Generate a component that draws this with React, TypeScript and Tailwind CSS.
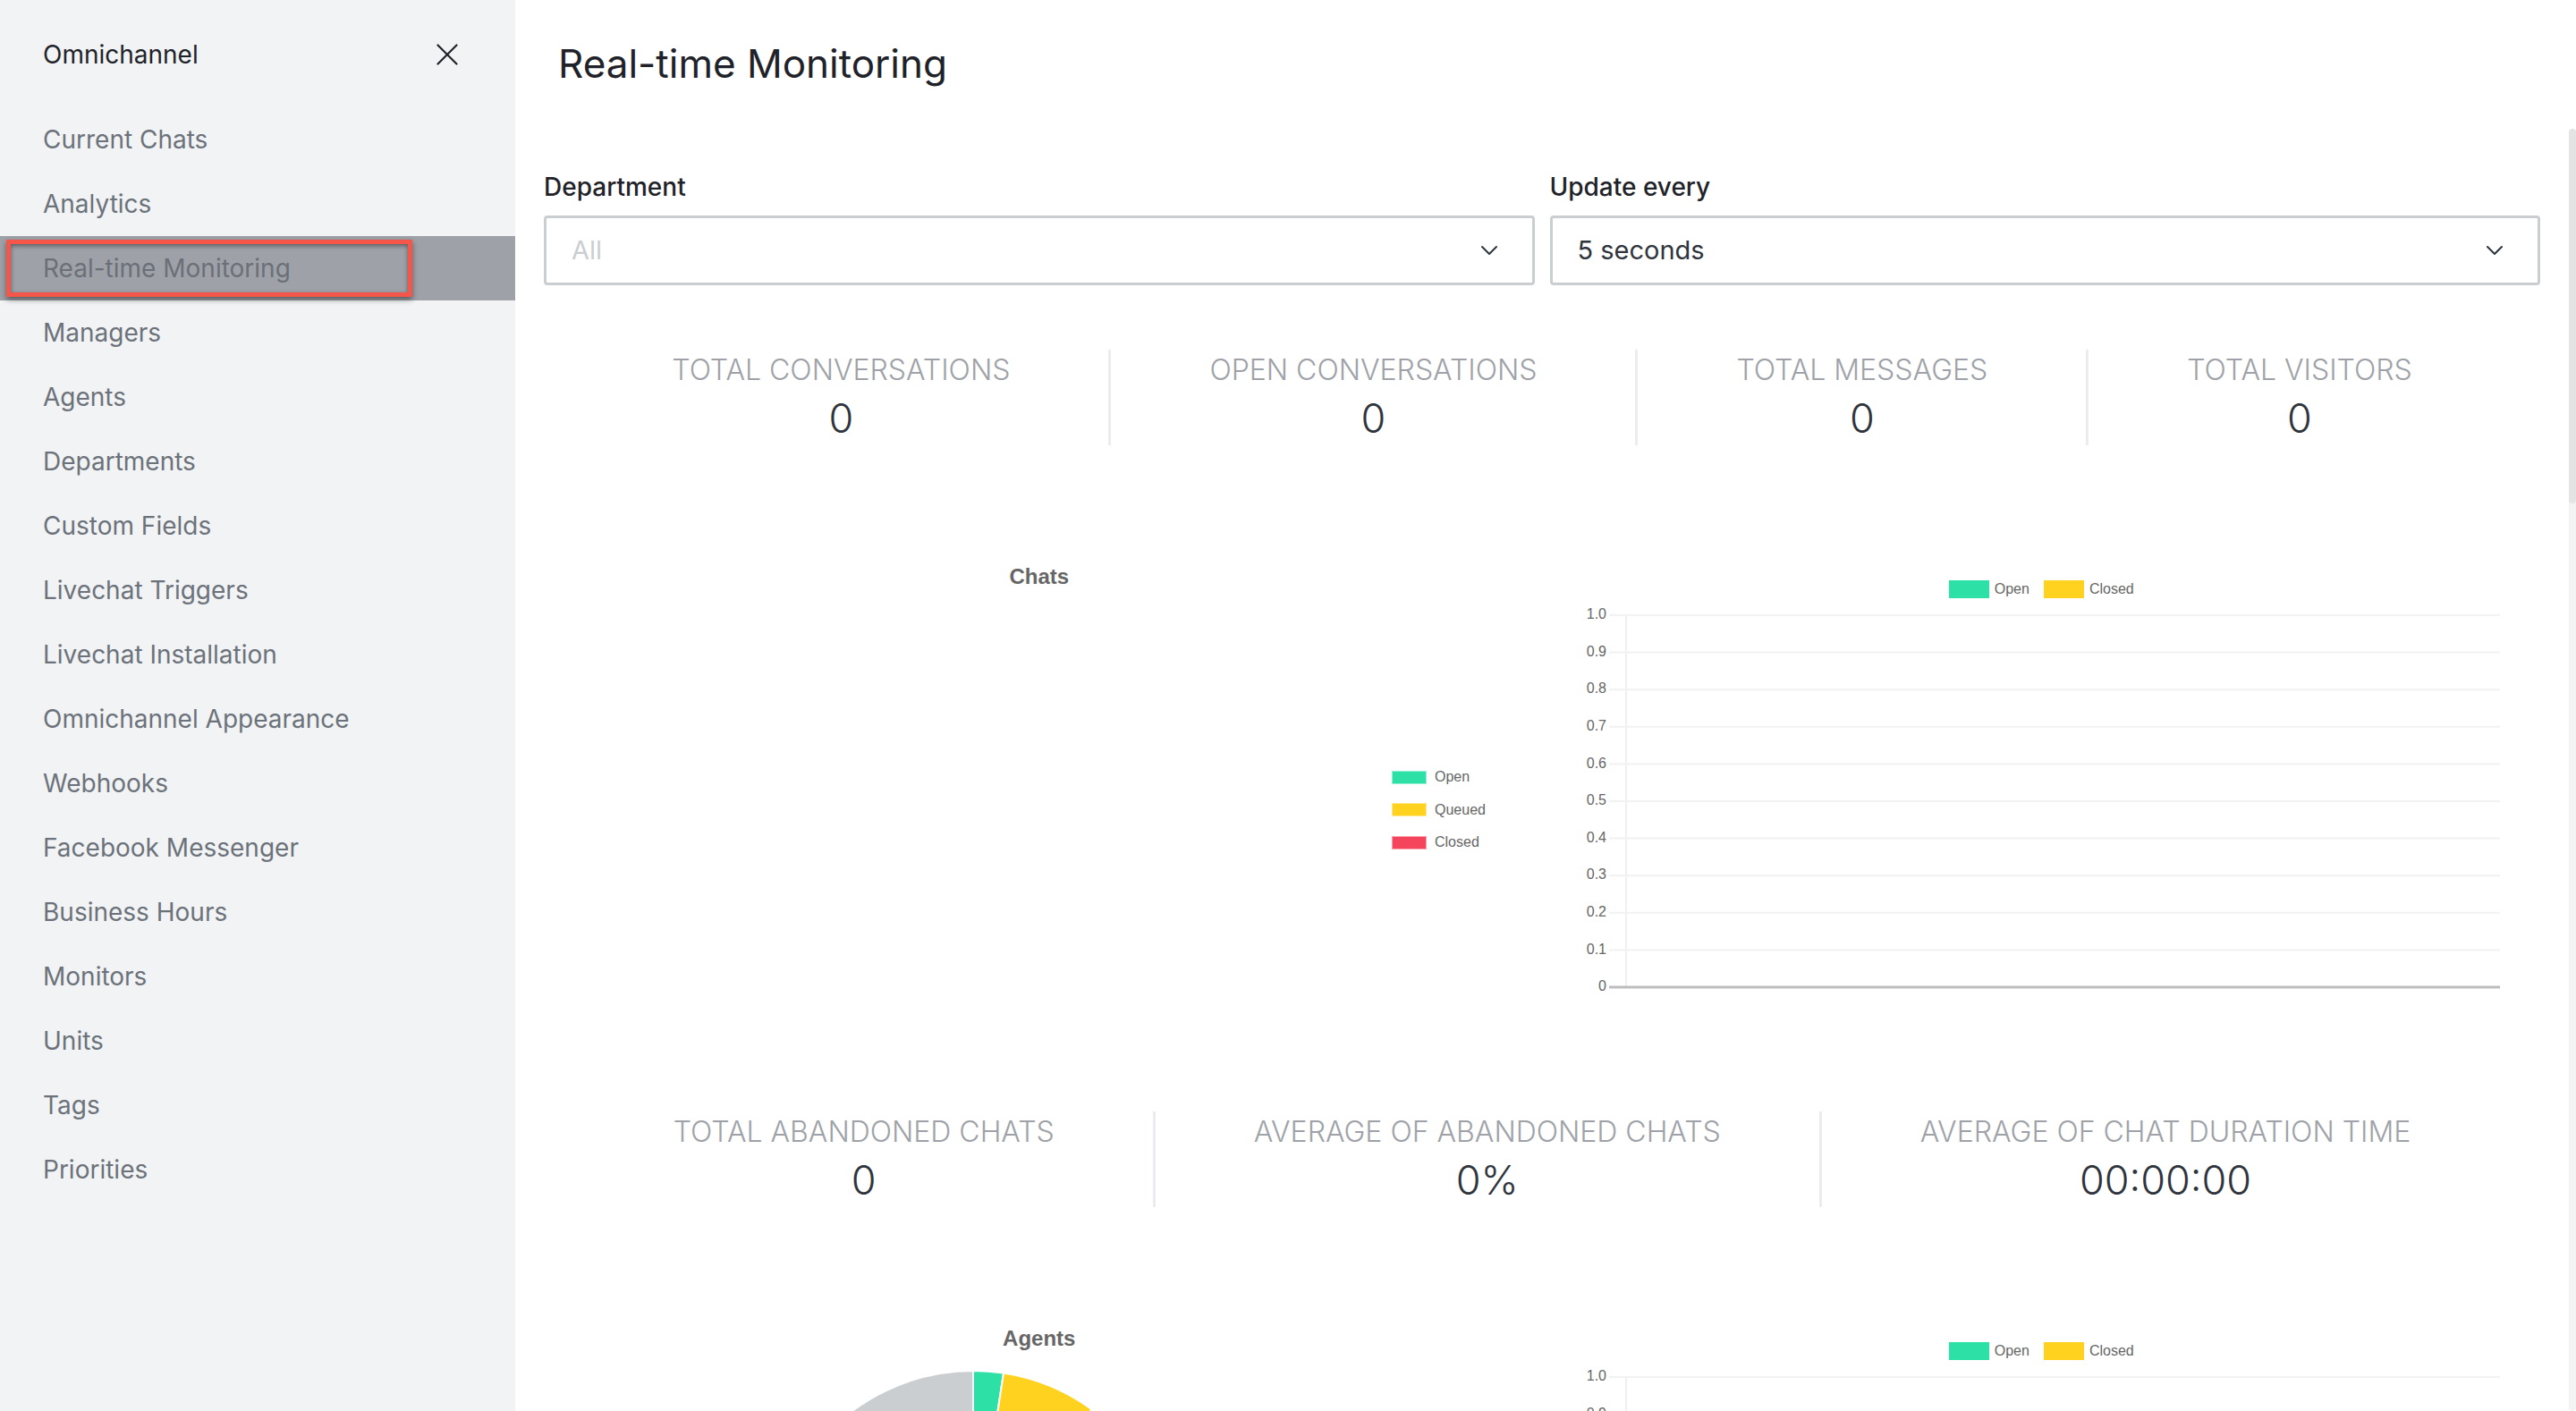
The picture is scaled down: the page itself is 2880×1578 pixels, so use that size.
import React from 'react';

const navItems = [
  'Current Chats',
  'Analytics',
  'Real-time Monitoring',
  'Managers',
  'Agents',
  'Departments',
  'Custom Fields',
  'Livechat Triggers',
  'Livechat Installation',
  'Omnichannel Appearance',
  'Webhooks',
  'Facebook Messenger',
  'Business Hours',
  'Monitors',
  'Units',
  'Tags',
  'Priorities',
];

function Sidebar() {
  return (
    <aside className="w-[576px] shrink-0 h-full bg-[#f2f3f5] flex flex-col">
      <div className="flex items-center justify-between h-[120px] pt-[2px] pl-[48px] pr-[64px]">
        <span className="text-[28px] text-[#1f2329]">Omnichannel</span>
        <svg width="24" height="24" viewBox="0 0 24 24" fill="none" stroke="#1f2329" strokeWidth="2.2" strokeLinecap="round">
          <line x1="1.5" y1="1.5" x2="22.5" y2="22.5" />
          <line x1="22.5" y1="1.5" x2="1.5" y2="22.5" />
        </svg>
      </div>
      <nav className="flex flex-col">
        {navItems.map((item) => {
          const active = item === 'Real-time Monitoring';
          return (
            <div
              key={item}
              className={
                active
                  ? 'relative h-[72px] flex items-center pl-[48px] bg-[#9ea2a8] text-[#6b7078] text-[28px]'
                  : 'h-[72px] flex items-center pl-[48px] text-[#6c727a] text-[28px]'
              }
            >
              <span className="whitespace-nowrap">{item}</span>
              {active && (
                <div className="absolute left-[7px] top-[4px] w-[454px] h-[64px] border-[5px] border-[#f4574a] shadow-[0_3px_6px_rgba(0,0,0,0.45),inset_0_2px_5px_rgba(0,0,0,0.45)]" />
              )}
            </div>
          );
        })}
      </nav>
    </aside>
  );
}

function Chevron() {
  return (
    <svg width="20" height="12" viewBox="0 0 20 12" fill="none" stroke="#2f343d" strokeWidth="2" strokeLinecap="round" strokeLinejoin="round">
      <polyline points="2,2 10,10 18,2" />
    </svg>
  );
}

function Select({ label, value, placeholder }: { label: string; value: string; placeholder?: boolean }) {
  return (
    <div className="flex flex-col">
      <div className="text-[28px] leading-[40px] font-medium text-[#1f2329]">{label}</div>
      <div className="mt-[12px] h-[78px] border-[3px] border-[#cbced1] rounded-[4px] flex items-center justify-between pl-[28px] pr-[38px] bg-white">
        <span className={placeholder ? 'text-[29px] text-[#cbced1]' : 'text-[29px] text-[#2f343d]'}>{value}</span>
        <Chevron />
      </div>
    </div>
  );
}

function StatRow({ items }: { items: { label: string; value: string }[] }) {
  return (
    <div className="flex justify-center">
      {items.map((it, i) => (
        <div
          key={it.label}
          className={
            i > 0
              ? 'flex flex-col items-center h-[107px] pt-[4px] px-[110px] border-l-[3px] border-[#ebecef]'
              : 'flex flex-col items-center h-[107px] pt-[4px] px-[110px]'
          }
        >
          <div className="text-[32px] leading-[38px] font-light text-[#9ea2a8] whitespace-nowrap">{it.label}</div>
          <div className="mt-[8px] text-[45px] leading-[54px] font-light text-[#2f343d] whitespace-nowrap">{it.value}</div>
        </div>
      ))}
    </div>
  );
}

function LegendBox({ color, label }: { color: string; label: string }) {
  return (
    <div className="h-[36.5px] flex items-center">
      <span className="w-[39px] h-[15px] border border-white/50" style={{ background: color }} />
      <span className="ml-[9px] text-[16px] text-[#666666]">{label}</span>
    </div>
  );
}

function Pie() {
  return (
    <svg width="450" height="450" viewBox="0 0 450 450">
      <path d="M225,225 L357.3,43.0 A225,225 0 1 1 225,0 Z" fill="#cbced1" stroke="#ffffff" strokeWidth="2" />
      <path d="M225,225 L225,0 A225,225 0 0 1 259.0,2.6 Z" fill="#2de0a5" stroke="#ffffff" strokeWidth="2" />
      <path d="M225,225 L259.0,2.6 A225,225 0 0 1 357.3,43.0 Z" fill="#ffd21f" stroke="#ffffff" strokeWidth="2" />
    </svg>
  );
}

function BarPlot() {
  const ticks = ['1.0', '0.9', '0.8', '0.7', '0.6', '0.5', '0.4', '0.3', '0.2', '0.1', '0'];
  const top = 19;
  const step = 41.6;
  return (
    <svg width="1107" height="462" viewBox="0 0 1107 462" className="block">
      <line x1="85" y1={top} x2="85" y2={top + step * 10} stroke="#f0f0f0" strokeWidth="2" />
      {ticks.map((t, i) => {
        const y = top + step * i;
        const last = i === ticks.length - 1;
        return (
          <g key={t}>
            <line x1="66" y1={y} x2="1062" y2={y} stroke={last ? '#bdbdbd' : '#f2f2f2'} strokeWidth={last ? 3 : 2} />
            <text x="63" y={y} textAnchor="end" dominantBaseline="middle" fontSize="16" fill="#666666" fontFamily="'Liberation Sans', Arial, sans-serif">
              {t}
            </text>
          </g>
        );
      })}
    </svg>
  );
}

function ChartRow({ title, showPie }: { title: string; showPie: boolean }) {
  return (
    <div className="grid grid-cols-2 gap-x-[17px] h-[521px] my-[112px] font-['Liberation_Sans',Arial,sans-serif]">
      <div className="flex flex-col items-center pt-[21px]">
        <div className="text-[24px] leading-[28px] font-bold text-[#666666]">{title}</div>
        <div className="flex w-full flex-1">
          <div className="w-[948px] shrink-0 pl-[12px] pt-[22px] flex justify-center">{showPie && <Pie />}</div>
          <div className="flex flex-col pt-[192px]">
            {!showPie && (
              <>
                <LegendBox color="#2de0a5" label="Open" />
                <LegendBox color="#ffd21f" label="Queued" />
                <LegendBox color="#f5455c" label="Closed" />
              </>
            )}
          </div>
        </div>
      </div>
      <div className="flex flex-col items-center pt-[39px]">
        <div className="flex items-center h-[20px] -ml-[8px]">
          <span className="w-[45px] h-[20px] bg-[#2de0a5]" />
          <span className="ml-[6px] text-[16px] text-[#666666]">Open</span>
          <span className="ml-[16px] w-[45px] h-[20px] bg-[#ffd21f]" />
          <span className="ml-[6px] text-[16px] text-[#666666]">Closed</span>
        </div>
        <BarPlot />
      </div>
    </div>
  );
}

export default function App() {
  return (
    <div className="w-[2880px] h-[1578px] overflow-hidden flex bg-white font-['Inter','Noto_Sans',sans-serif]">
      <Sidebar />
      <main className="flex-1 min-w-0 h-full flex flex-col bg-white">
        <header className="h-[136px] shrink-0 flex items-center pl-[48px] pt-[6px]">
          <h1 className="text-[44px] leading-[56px] text-[#1f2329]">Real-time Monitoring</h1>
        </header>
        <div className="flex-1 min-h-0 flex">
          <div className="flex-1 min-w-0 overflow-hidden px-[32px] pt-[53px]">
            <div className="grid grid-cols-2 gap-x-[17px]">
              <Select label="Department" value="All" placeholder />
              <Select label="Update every" value="5 seconds" />
            </div>
            <div className="mt-[72px]">
              <StatRow
                items={[
                  { label: 'TOTAL CONVERSATIONS', value: '0' },
                  { label: 'OPEN CONVERSATIONS', value: '0' },
                  { label: 'TOTAL MESSAGES', value: '0' },
                  { label: 'TOTAL VISITORS', value: '0' },
                ]}
              />
            </div>
            <ChartRow title="Chats" showPie={false} />
            <StatRow
              items={[
                { label: 'TOTAL ABANDONED CHATS', value: '0' },
                { label: 'AVERAGE OF ABANDONED CHATS', value: '0%' },
                { label: 'AVERAGE OF CHAT DURATION TIME', value: '00:00:00' },
              ]}
            />
            <ChartRow title="Agents" showPie={true} />
          </div>
          <div className="w-[8px] shrink-0 mt-[8px] bg-[#f3f3f3] rounded-full">
            <div className="h-[419px] bg-[#e4e4e4] rounded-full" />
          </div>
        </div>
      </main>
    </div>
  );
}
